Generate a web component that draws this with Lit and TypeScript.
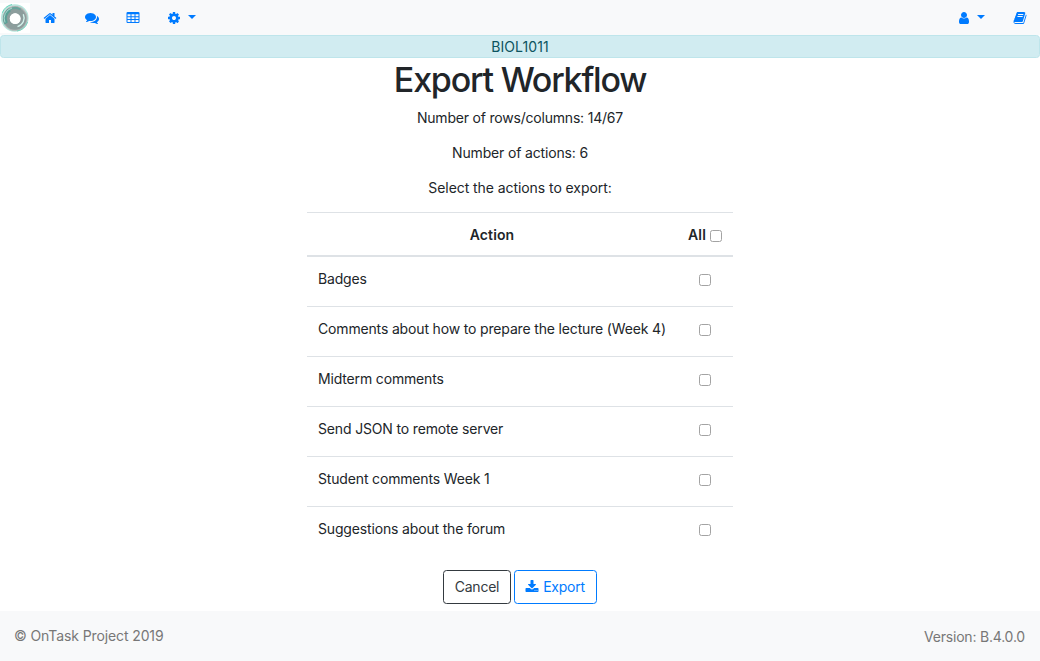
import { LitElement, html, css, svg } from "lit";
import { customElement, property, state } from "lit/decorators.js";

const ICONS: Record<string, string> = {
  home: "M1472 992v480q0 26-19 45t-45 19h-384v-384h-256v384h-384q-26 0-45-19t-19-45v-480q0-1 .5-3t.5-3l575-474 575 474q1 2 1 6zm223-69l-62 74q-8 9-21 11h-3q-13 0-21-7l-692-577-692 577q-12 8-24 7-13-2-21-11l-62-74q-8-10-7-23.5t11-21.5l719-599q32-26 76-26t76 26l244 204v-195q0-14 9-23t23-9h192q14 0 23 9t9 23v408l219 182q10 8 11 21.5t-7 23.5z",
  comments: "M1408 768q0 139-94 257t-256.5 186.5-353.5 68.5q-86 0-176-16-124 88-278 128-36 9-86 16h-3q-11 0-20.5-8t-11.5-21q-1-3-1-6.5t.5-6.5 2-6l2.5-5 3.5-5.5 4-5 4.5-5 4-4.5q5-6 23-25t26-29.5 22.5-29 25-38.5 20.5-44q-124-72-195-177t-71-224q0-139 94-257t256.5-186.5 353.5-68.5 353.5 68.5 256.5 186.5 94 257zm384 256q0 120-71 224.5t-195 176.5q10 24 20.5 44t25 38.5 22.5 29 26 29.5 23 25q1 1 4 4.5t4.5 5 4 5 3.5 5.5l2.5 5 2 6 .5 6.5-1 6.5q-3 14-13 22t-22 7q-50-7-86-16-154-40-278-128-90 16-176 16-271 0-472-132 58 4 88 4 161 0 309-45t264-129q125-92 192-212t67-254q0-77-23-152 129 71 204 178t75 230z",
  table: "M224 128h1344q66 0 113 47t47 113v1088q0 66-47 113t-113 47h-1344q-66 0-113-47t-47-113v-1088q0-66 47-113t113-47zM192 416v256h384v-256zM704 416v256h384v-256zM1216 416v256h384v-256zM192 800v224h384v-224zM704 800v224h384v-224zM1216 800v224h384v-224zM192 1152v256h384v-256zM704 1152v256h384v-256zM1216 1152v256h384v-256z",
  cog: "M1152 896q0-106-75-181t-181-75-181 75-75 181 75 181 181 75 181-75 75-181zm512-109v222q0 12-8 23t-20 13l-185 28q-19 54-39 91 35 50 107 138 10 12 10 25t-9 23q-27 37-99 108t-94 71q-12 0-26-9l-138-108q-44 23-91 38-16 136-29 186-7 28-36 28h-222q-14 0-24.5-8.5t-11.5-21.5l-28-184q-49-16-90-37l-141 107q-10 9-25 9-14 0-25-11-126-114-165-168-7-10-7-23 0-12 8-23 15-21 51-66.5t54-70.5q-27-50-41-99l-183-27q-13-2-21-12.5t-8-23.5v-222q0-12 8-23t19-13l186-28q14-46 39-92-40-57-107-138-10-12-10-24 0-10 9-23 26-36 98.5-107.5t94.5-71.5q13 0 26 10l138 107q44-23 91-38 16-136 29-186 7-28 36-28h222q14 0 24.5 8.5t11.5 21.5l28 184q49 16 90 37l142-107q9-9 24-9 13 0 25 10 129 119 165 170 7 8 7 22 0 12-8 23-15 21-51 66.5t-54 70.5q26 50 41 98l183 28q13 2 21 12.5t8 23.5z",
  user: "M1536 1399q0 109-62.5 187t-150.5 78h-854q-88 0-150.5-78t-62.5-187q0-85 8.5-160.5t31.5-152 58.5-131 94-89 134.5-34.5q131 128 313 128t313-128q76 0 134.5 34.5t94 89 58.5 131 31.5 152 8.5 160.5zm-256-887q0 159-112.5 271.5t-271.5 112.5-271.5-112.5-112.5-271.5 112.5-271.5 271.5-112.5 271.5 112.5 112.5 271.5z",
  book: "M1703 478q40 57 18 129l-275 906q-19 64-76.5 107.5t-122.5 43.5h-923q-77 0-148.5-53.5t-99.5-131.5q-24-67-2-127 0-4 3-27t4-37q1-8-3-21.5t-3-19.5q2-11 8-21t16.5-23.5 16.5-23.5q23-38 45-91.5t30-91.5q3-10 .5-30t-.5-28q3-11 17-28t17-23q21-36 42-92t25-90q1-9-2.5-32t.5-28q4-13 22-30.5t22-22.5q19-26 42.5-84.5t27.5-96.5q1-8-3-25.5t-2-26.5q2-8 9-18t18-23 17-21q8-12 16.5-30.5t15-35 16-36 19.5-32 26.5-23.5 36-11.5 47.5 5.5l-1 3q38-9 51-9h761q74 0 114 56t18 130l-274 906q-36 119-71.5 153.5t-128.5 34.5h-869q-27 0-38 15-11 16-1 43 24 70 144 70h923q29 0 56-15.5t35-41.5l300-987q7-22 5-57 38 15 59 43zm-1064 2q-4 13 2 22.5t20 9.5h608q13 0 25.5-9.5t16.5-22.5l21-64q4-13-2-22.5t-20-9.5h-608q-13 0-25.5 9.5t-16.5 22.5zm-83 256q-4 13 2 22.5t20 9.5h608q13 0 25.5-9.5t16.5-22.5l21-64q4-13-2-22.5t-20-9.5h-608q-13 0-25.5 9.5t-16.5 22.5z",
  download: "M1344 1344q0-26-19-45t-45-19-45 19-19 45 19 45 45 19 45-19 19-45zm256 0q0-26-19-45t-45-19-45 19-19 45 19 45 45 19 45-19 19-45zm128-224v320q0 40-28 68t-68 28h-1472q-40 0-68-28t-28-68v-320q0-40 28-68t68-28h465l135 136q58 56 136 56t136-56l136-136h464q40 0 68 28t28 68zm-325-569q17 41-14 70l-448 448q-18 19-45 19t-45-19l-448-448q-31-29-14-70 17-39 59-39h256v-448q0-26 19-45t45-19h256q26 0 45 19t19 45v448h256q42 0 59 39z",
};

@customElement("fa-icon")
class FaIcon extends LitElement {
  @property() name = "home";

  static styles = css`
    :host { display: inline-flex; width: 14px; height: 14px; flex: none; }
    svg { display: block; width: 14px; height: 14px; fill: currentColor; }
  `;

  render() {
    return html`<svg viewBox="0 0 1792 1792" aria-hidden="true">
      ${svg`<path fill-rule="evenodd" d=${ICONS[this.name]}></path>`}
    </svg>`;
  }
}

@customElement("app-logo")
class AppLogo extends LitElement {
  static styles = css`
    :host { display: block; width: 30px; height: 30px; background: #fff; }
    svg { display: block; }
  `;

  render() {
    return html`<svg width="30" height="30" viewBox="0 0 30 30" fill="none">
      <circle cx="14.8" cy="15" r="13" stroke="#b4e6dc" stroke-width="1.6" />
      <circle cx="15" cy="15.3" r="11.6" stroke="#b0b5b5" stroke-width="1.8" />
      <circle cx="15" cy="15.5" r="8.3" stroke="#8c9d9c" stroke-width="6" />
      <path d="M6.2 20.5A10 10 0 0 1 10 6.8" stroke="#5aa096" stroke-width="3.6" />
      <path d="M10 6.3A10.5 10.5 0 0 1 20.5 6.5" stroke="#68a59b" stroke-width="2" />
      <path d="M5 19.5A10.7 10.7 0 0 1 12 5" stroke="#c4e5de" stroke-width=".8" />
      <path d="M23.3 11.2A9 9 0 0 1 17.5 23.6" stroke="#d3f2ec" stroke-width="1.4" />
      <path d="M2.3 9.8A13.5 13.5 0 0 1 12 1.5" stroke="#6ed3bd" stroke-width="1" />
      <path d="M27.5 19A13.3 13.3 0 0 1 17 28" stroke="#78d3be" stroke-width="1" />
      <circle cx="15.3" cy="15.7" r="5.4" fill="#fff" />
    </svg>`;
  }
}

@customElement("app-root")
class AppRoot extends LitElement {
  @state() private selected = new Set<number>();

  private actions = [
    "Badges",
    "Comments about how to prepare the lecture (Week 4)",
    "Midterm comments",
    "Send JSON to remote server",
    "Student comments Week 1",
    "Suggestions about the forum",
  ];

  static styles = css`
    :host {
      display: flex;
      flex-direction: column;
      height: 661px;
      box-sizing: border-box;
      background: #fff;
      color: #212529;
      font: 14px/21px Inter, "Liberation Sans", sans-serif;
      letter-spacing: -0.16px;
    }
    * { box-sizing: border-box; }
    .nav {
      display: flex;
      align-items: center;
      height: 35px;
      padding: 1px 13.5px 0 0;
      background: #f8f9fa;
      color: #007bff;
    }
    .nav a { display: flex; align-items: center; color: inherit; }
    .home { margin-left: 13.4px; }
    .talk { margin-left: 27.6px; }
    .grid { margin-left: 27.4px; }
    .settings { margin-left: 26.6px; gap: 7px; }
    .account { margin-left: auto; gap: 6px; }
    .docs { margin-left: 27.5px; }
    .caret {
      border: 4px solid transparent;
      border-top-color: currentColor;
      border-bottom: 0;
      margin-top: -2px;
    }
    .banner {
      height: 23px;
      border: 1px solid #bee5eb;
      border-radius: 3.5px;
      background: #d1ecf1;
      color: #0c5460;
      text-align: center;
      letter-spacing: 0.1px;
    }
    .main { display: flex; flex-direction: column; align-items: center; }
    h1 {
      margin: 0;
      padding-top: 1px;
      height: 49px;
      font-size: 34px;
      line-height: 42px;
      font-weight: 500;
      letter-spacing: -1.22px;
    }
    p { margin: 0 0 14px; }
    .rows { letter-spacing: -0.2px; }
    .prompt { letter-spacing: -0.07px; }
    table { width: 426px; border-collapse: separate; border-spacing: 0; }
    th, td { padding: 0; border-top: 1px solid #dee2e6; text-align: center; }
    th { height: 45px; border-bottom: 2px solid #dee2e6; font-weight: 600; letter-spacing: 0.12px; }
    td { height: 50px; padding-bottom: 5px; }
    tr:first-child > td { border-top: 0; height: 49px; }
    .name { width: 370px; padding: 0 0 7px 11px; text-align: left; }
    .pick { width: 56px; }
    .all { display: flex; align-items: center; justify-content: center; gap: 4px; }
    input {
      appearance: none;
      display: block;
      width: 12px;
      height: 12px;
      margin: 2px auto 0;
      border: 1px solid #a3a3a3;
      border-radius: 2.5px;
      background: #fff;
    }
    input:checked { background: #007bff; }
    .all input { margin: 3px 0 0; }
    .buttons { display: flex; gap: 3px; margin-top: 14px; }
    button {
      display: flex;
      align-items: center;
      justify-content: center;
      gap: 4px;
      height: 34px;
      padding: 0 0 2px;
      border: 1px solid #343a40;
      border-radius: 3.5px;
      background: transparent;
      color: #343a40;
      font: inherit;
      letter-spacing: -0.25px;
    }
    .cancel { width: 68px; }
    .export { width: 83px; padding-right: 1px; border-color: #007bff; color: #007bff; }
    .export fa-icon { margin-top: 1px; }
    .footer {
      display: flex;
      align-items: center;
      justify-content: space-between;
      height: 50px;
      margin-top: auto;
      padding: 0 15px 0 14px;
      background: #f8f9fa;
      color: #777;
    }
    .copy { padding-bottom: 2px; letter-spacing: -0.11px; }
    .version { letter-spacing: -0.2px; }
  `;

  private toggle(i: number) {
    const next = new Set(this.selected);
    next.has(i) ? next.delete(i) : next.add(i);
    this.selected = next;
  }

  private toggleAll(e: Event) {
    const on = (e.target as HTMLInputElement).checked;
    this.selected = new Set(on ? this.actions.map((_, i) => i) : []);
  }

  render() {
    return html`
      <nav class="nav">
        <app-logo></app-logo>
        <a class="home"><fa-icon name="home"></fa-icon></a>
        <a class="talk"><fa-icon name="comments"></fa-icon></a>
        <a class="grid"><fa-icon name="table"></fa-icon></a>
        <a class="settings"><fa-icon name="cog"></fa-icon><span class="caret"></span></a>
        <a class="account"><fa-icon name="user"></fa-icon><span class="caret"></span></a>
        <a class="docs"><fa-icon name="book"></fa-icon></a>
      </nav>
      <div class="banner">BIOL1011</div>
      <main class="main">
        <h1>Export Workflow</h1>
        <p class="rows">Number of rows/columns: 14/67</p>
        <p>Number of actions: 6</p>
        <p class="prompt">Select the actions to export:</p>
        <table>
          <thead>
            <tr>
              <th class="heading">Action</th>
              <th class="pick">
                <span class="all">All <input type="checkbox" aria-label="All" @change=${this.toggleAll} /></span>
              </th>
            </tr>
          </thead>
          <tbody>
            ${this.actions.map(
              (name, i) => html`<tr>
                <td class="name">${name}</td>
                <td class="pick">
                  <input type="checkbox" aria-label=${name} .checked=${this.selected.has(i)} @change=${() => this.toggle(i)} />
                </td>
              </tr>`
            )}
          </tbody>
        </table>
        <div class="buttons">
          <button class="cancel">Cancel</button>
          <button class="export"><fa-icon name="download"></fa-icon>Export</button>
        </div>
      </main>
      <footer class="footer">
        <span class="copy">© OnTask Project 2019</span>
        <span class="version">Version: B.4.0.0</span>
      </footer>
    `;
  }
}
